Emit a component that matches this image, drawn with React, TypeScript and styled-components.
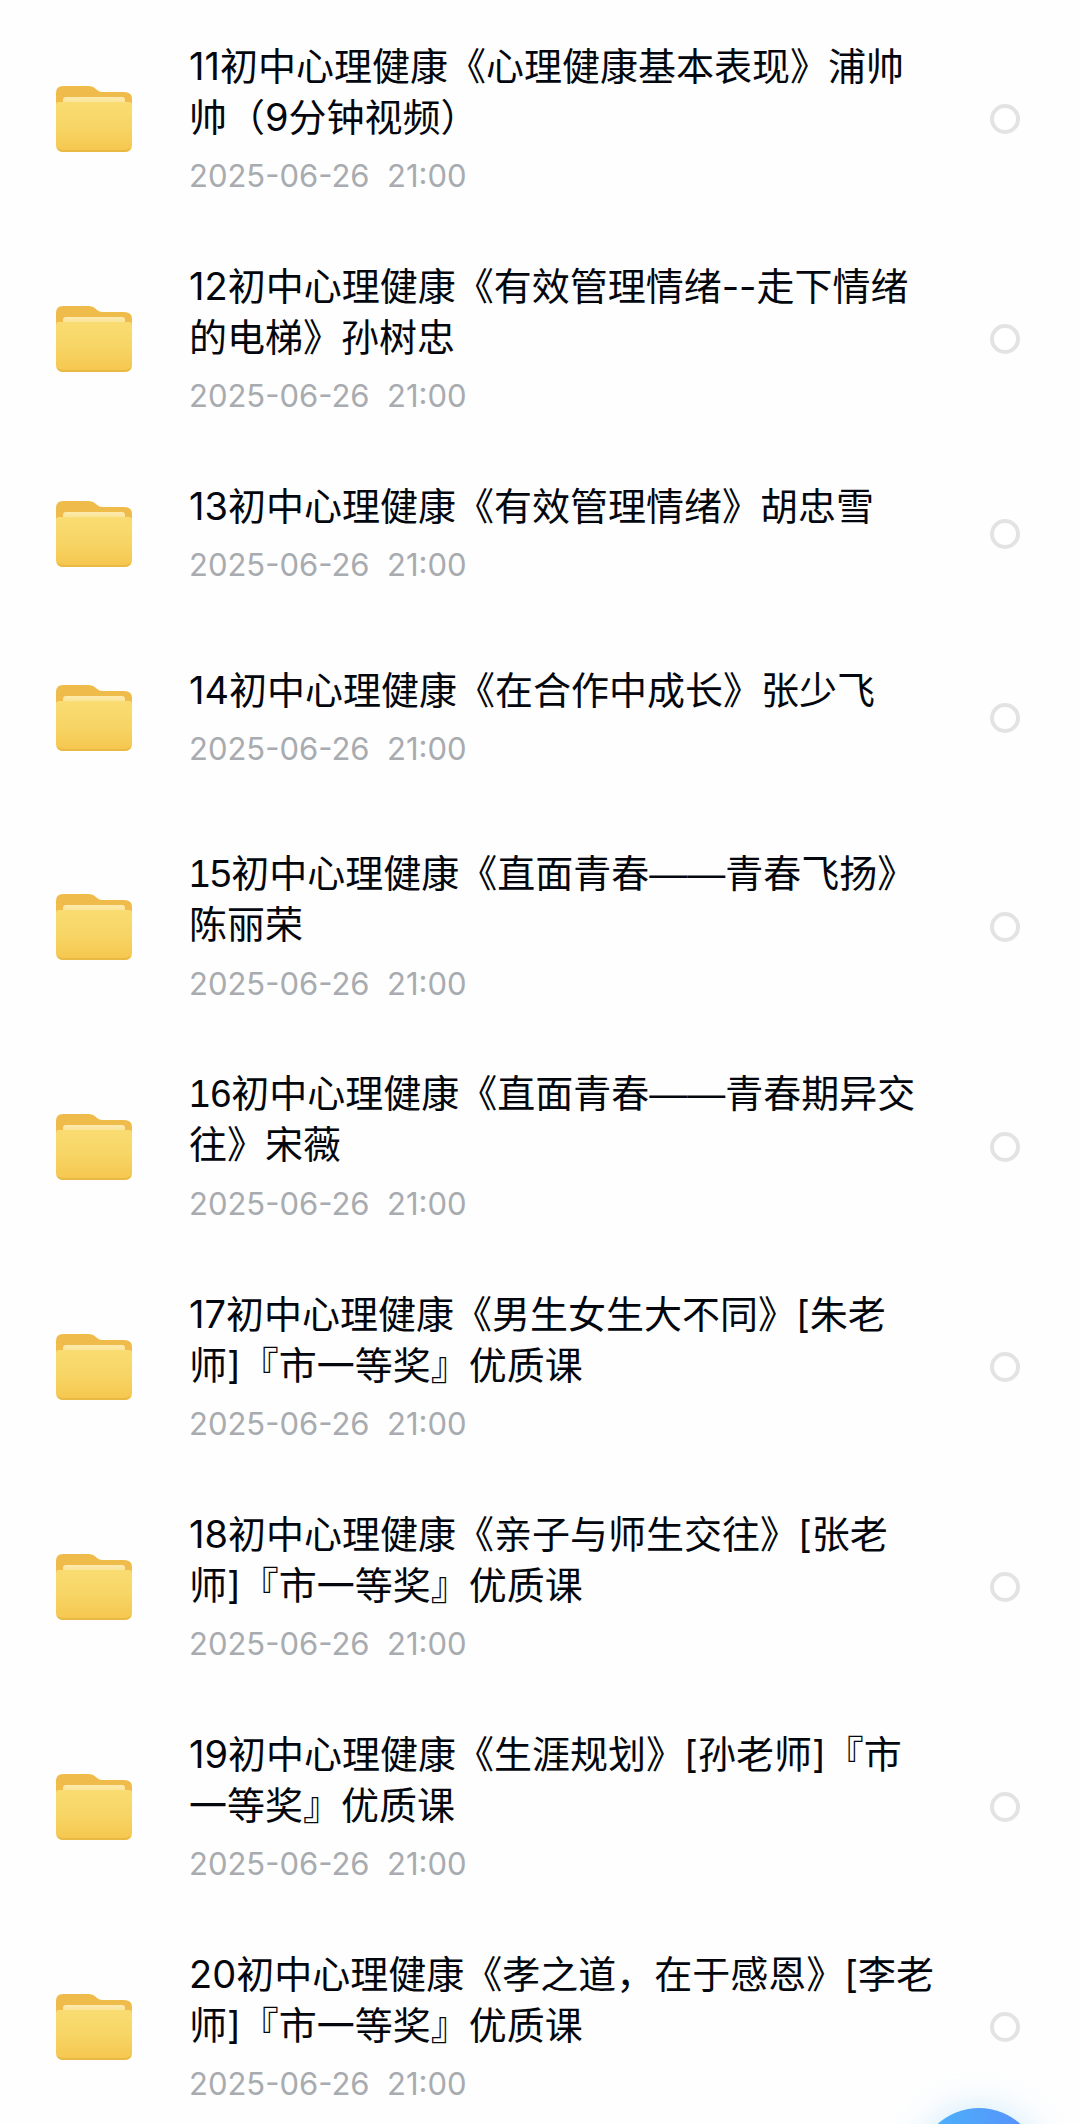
import React, { useState } from "react";
import styled, { createGlobalStyle } from "styled-components";

const GlobalStyle = createGlobalStyle`
  *, *::before, *::after { box-sizing: border-box; }
  body {
    margin: 0;
    background: #fefefe;
    font-family: Inter, "Noto Sans CJK SC", sans-serif;
  }
`;

const Screen = styled.main`
  height: 100vh;
  overflow-y: auto;
  scrollbar-width: none;
`;

const FileList = styled.ul`
  margin: 0;
  padding: 9px 0 0;
  list-style: none;
`;

const FileItem = styled.li`
  min-height: 184px;
`;

const Row = styled.label`
  display: flex;
  align-items: center;
  padding: 32px 60px 32px 56px;
  cursor: pointer;
`;

const FolderSvg = styled.svg`
  flex: none;
  width: 76px;
  height: 68px;
  margin-right: 57px;
`;

const Info = styled.div`
  flex: 1;
  min-width: 0;
  margin-right: 55px;
`;

/* Inter's em dash is short; a joined "——" needs a font with a full-width one. */
const Name = styled.div<{ $longDash: boolean }>`
  font-family: ${({ $longDash }) => ($longDash ? '"Liberation Sans"' : "Inter")},
    "Noto Sans CJK SC", sans-serif;
  font-size: 38px;
  font-weight: 400;
  line-height: 51px;
  color: #04080e;
`;

const Time = styled.time`
  display: block;
  margin-top: 12px;
  font-size: 31px;
  line-height: 42px;
  color: #a8abaf;
  white-space: pre;
`;

const Check = styled.input`
  flex: none;
  appearance: none;
  width: 30px;
  height: 30px;
  margin: 0;
  border: 4px solid #e3e3e4;
  border-radius: 50%;
  background: #fff;

  &:checked {
    border-color: #4a9cf8;
    background: #4a9cf8;
  }
`;

const AddButton = styled.button`
  position: fixed;
  right: 39px;
  bottom: -108px;
  width: 124px;
  height: 124px;
  padding: 0;
  border: 0;
  border-radius: 50%;
  background: linear-gradient(90deg, #4db0fa 15%, #5595fb 80%);
  box-shadow: 0 0 36px rgba(90, 190, 250, 0.3);
`;

const files = [
  "11初中心理健康《心理健康基本表现》浦帅帅（9分钟视频）",
  "12初中心理健康《有效管理情绪--走下情绪的电梯》孙树忠",
  "13初中心理健康《有效管理情绪》胡忠雪",
  "14初中心理健康《在合作中成长》张少飞",
  "15初中心理健康《直面青春——青春飞扬》陈丽荣",
  "16初中心理健康《直面青春——青春期异交往》宋薇",
  "17初中心理健康《男生女生大不同》[朱老师]『市一等奖』优质课",
  "18初中心理健康《亲子与师生交往》[张老师]『市一等奖』优质课",
  "19初中心理健康《生涯规划》[孙老师]『市一等奖』优质课",
  "20初中心理健康《孝之道，在于感恩》[李老师]『市一等奖』优质课",
];

function FolderIcon() {
  return (
    <FolderSvg viewBox="0 0 76 68" aria-hidden="true">
      <defs>
        <linearGradient id="folderFront" x1="0" y1="0" x2="0" y2="1">
          <stop offset="0" stopColor="#f9dc72" />
          <stop offset="0.5" stopColor="#f7d565" />
          <stop offset="1" stopColor="#f5c64e" />
        </linearGradient>
        <linearGradient id="folderPaper" x1="0" y1="0" x2="0" y2="1">
          <stop offset="0" stopColor="#fdeaae" />
          <stop offset="1" stopColor="#fadf80" />
        </linearGradient>
      </defs>
      <path
        d="M0 8Q0 1 7 1H33Q37 1 40 4L41 5Q43 7 47 7H68Q76 7 76 14V30H0Z"
        fill="#efbc4b"
      />
      <rect x="7" y="12" width="62" height="10" rx="3" fill="url(#folderPaper)" />
      <path
        d="M0 20Q0 17 3 17H73Q76 17 76 20V60Q76 67 69 67H7Q0 67 0 60Z"
        fill="url(#folderFront)"
      />
      <path
        d="M1 62Q2 67 8 67H68Q74 67 75 62Q73 65 68 65H8Q3 65 1 62Z"
        fill="#e9b945"
      />
    </FolderSvg>
  );
}

export default function App() {
  const [selected, setSelected] = useState<string[]>([]);

  const toggle = (name: string) =>
    setSelected((current) =>
      current.includes(name)
        ? current.filter((item) => item !== name)
        : [...current, name]
    );

  return (
    <>
      <GlobalStyle />
      <Screen>
        <FileList>
          {files.map((name) => (
            <FileItem key={name}>
              <Row>
                <FolderIcon />
                <Info>
                  <Name $longDash={name.includes("——")}>{name}</Name>
                  <Time dateTime="2025-06-26T21:00">{"2025-06-26  21:00"}</Time>
                </Info>
                <Check
                  type="checkbox"
                  checked={selected.includes(name)}
                  onChange={() => toggle(name)}
                />
              </Row>
            </FileItem>
          ))}
        </FileList>
      </Screen>
      <AddButton type="button" aria-label="添加" />
    </>
  );
}
